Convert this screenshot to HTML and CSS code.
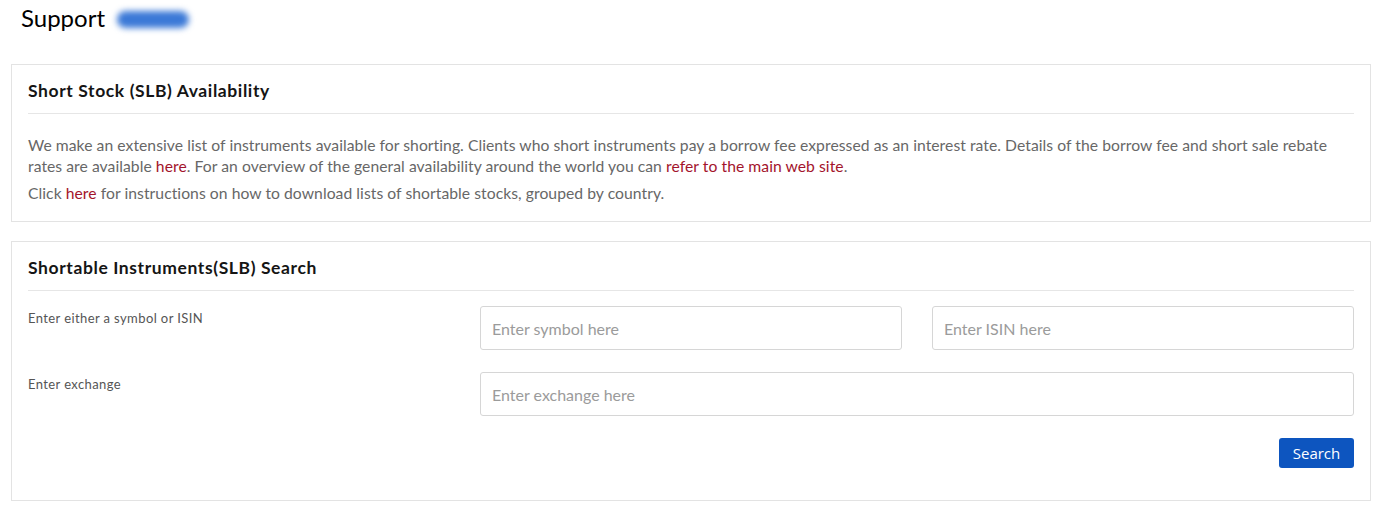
FILE: index.html
```html
<!DOCTYPE html>
<html lang="en">
<head>
    <meta charset="UTF-8">
    <meta name="viewport" content="width=device-width, initial-scale=1.0">
    <title>Support - Short Stock (SLB)</title>
    <link rel="stylesheet" href="styles.css">
</head>
<body>
    <header class="page-title">
        <h1>Support</h1>
        <span class="blur-pill"></span>
    </header>

    <section class="panel">
        <h3>Short Stock (SLB) Availability</h3>
        <div class="panel-body">
            <p>We make an extensive list of instruments available for shorting. Clients who short instruments pay a borrow fee expressed as an interest rate. Details of the borrow fee and short sale rebate rates are available <a href="#">here</a>. For an overview of the general availability around the world you can <a href="#">refer to the main web site</a>.</p>
            <p>Click <a href="#">here</a> for instructions on how to download lists of shortable stocks, grouped by country.</p>
        </div>
    </section>

    <section class="panel">
        <h3>Shortable Instruments(SLB) Search</h3>
        <form class="search-form" onsubmit="return false">
            <label class="field-label" for="symbol">Enter either a symbol or ISIN</label>
            <input type="text" id="symbol" placeholder="Enter symbol here">
            <input type="text" id="isin" placeholder="Enter ISIN here">

            <label class="field-label" for="exchange">Enter exchange</label>
            <input type="text" id="exchange" class="wide" placeholder="Enter exchange here">

            <div class="actions">
                <button type="submit">Search</button>
            </div>
        </form>
    </section>
</body>
</html>
```

FILE: styles.css
```css
/* Geral */
body {
    margin: 0;
    padding: 0 9px 0 11px;
    font-family: 'Lato', 'Liberation Sans', sans-serif;
    background-color: #fff;
    color: #222;
}

/* Titulo */
.page-title {
    display: flex;
    align-items: center;
    gap: 12px;
    height: 34px;
    padding-left: 10px;
    margin-bottom: 30px;
}
.page-title h1 {
    margin: 0;
    font-size: 24px;
    font-weight: 400;
    color: #000;
}
.blur-pill {
    display: inline-block;
    width: 72px;
    height: 17px;
    margin-top: 4px;
    border-radius: 9px;
    background-color: #3b79d7;
    filter: blur(3px);
}

/* Paineis */
.panel {
    border: 1px solid #e3e3e3;
    padding: 0 16px;
    margin-bottom: 19px;
}
.panel h3 {
    margin: 0;
    padding: 16px 0 12px;
    font-size: 17.5px;
    line-height: 20px;
    font-weight: 700;
    letter-spacing: 0.6px;
    color: #151515;
    border-bottom: 1px solid #e6e6e6;
}
.panel-body {
    padding: 21px 0 17px;
}
.panel-body p {
    margin: 0 0 6px;
    font-size: 15.7px;
    line-height: 21px;
    letter-spacing: 0.05px;
    color: #676767;
}
.panel-body p:last-child {
    margin-bottom: 0;
}
.panel-body a {
    color: #a3142c;
    text-decoration: none;
}

/* Formulario */
.search-form {
    display: grid;
    grid-template-columns: repeat(3, 1fr);
    column-gap: 30px;
    row-gap: 22px;
    padding: 15px 0 32px;
}
.field-label {
    font-size: 13px;
    line-height: 16px;
    letter-spacing: 0.4px;
    color: #555;
    padding-top: 4px;
}
.search-form input {
    height: 44px;
    box-sizing: border-box;
    padding: 0 11px;
    border: 1px solid #d6d6d6;
    border-radius: 3px;
    font-family: inherit;
    font-size: 16px;
    color: #333;
}
.search-form input::placeholder {
    color: #9b9b9b;
}
.search-form input.wide {
    grid-column: span 2;
}
.actions {
    grid-column: 1 / -1;
    display: flex;
    justify-content: flex-end;
}
.actions button {
    width: 75px;
    height: 30px;
    padding: 0;
    background-color: #0d55bf;
    color: #fff;
    border: none;
    border-radius: 3px;
    font-family: 'Open Sans', sans-serif;
    font-size: 15px;
    cursor: pointer;
}
.actions button:hover {
    background-color: #0a469e;
}
```
